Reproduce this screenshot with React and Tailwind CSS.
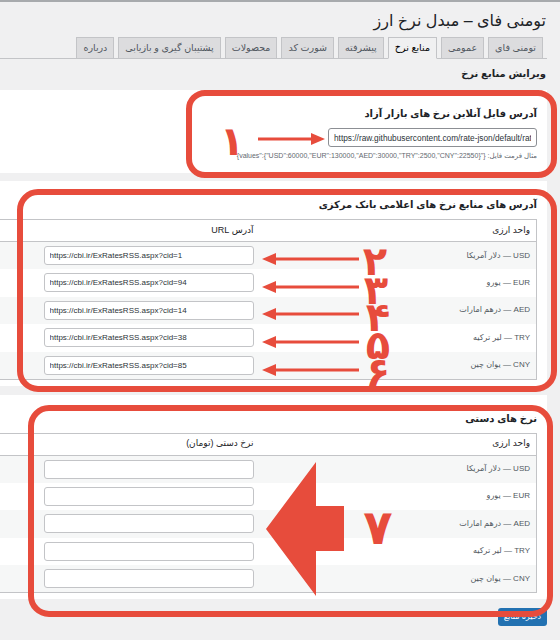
import React from "react";

const currencies = [
  { code: "USD", name: "دلار آمریکا", cid: 1 },
  { code: "EUR", name: "یورو", cid: 94 },
  { code: "AED", name: "درهم امارات", cid: 14 },
  { code: "TRY", name: "لیر ترکیه", cid: 38 },
  { code: "CNY", name: "یوان چین", cid: 85 },
];

const tabs = [
  "تومنی فای",
  "عمومی",
  "منابع نرخ",
  "پیشرفته",
  "شورت کد",
  "محصولات",
  "پشتیبان گیری و بازیابی",
  "درباره",
];

function RateTable({ title, colTitle, withUrl }) {
  return (
    <div className="bg-white pt-[16px] pb-[6px] pr-[10px] mb-[9px]">
      <h2 className="text-[10px] leading-[16px] font-bold text-[#1d2327] mb-[6px]">
        {title}
      </h2>
      <table className="w-full border border-l-0 border-[#c3c4c7] border-collapse">
        <thead>
          <tr className="h-[22px] border-b border-[#c3c4c7] bg-white">
            <th className="w-[277px] pr-[6px] text-right font-normal text-[9px] text-[#1d2327]">
              واحد ارزی
            </th>
            <th className="pr-[6px] text-right font-normal text-[9px] text-[#1d2327]">
              {colTitle}
            </th>
          </tr>
        </thead>
        <tbody>
          {currencies.map((c, i) => (
            <tr
              key={c.code}
              className={i % 2 === 0 ? "h-[27.5px] bg-[#f6f7f7]" : "h-[27.5px] bg-white"}
            >
              <td className="pr-[6px] text-[8px] text-[#50575e]">
                {c.code} — {c.name}
              </td>
              <td className="pr-[6px]">
                <input
                  readOnly
                  dir="ltr"
                  value={withUrl ? `https://cbi.ir/ExRatesRSS.aspx?cid=${c.cid}` : ""}
                  className="block w-[210px] h-[19px] border border-[#c3c4c7] rounded-[3px] bg-white px-[5px] text-[8px] text-[#2c3338] outline-none"
                />
              </td>
            </tr>
          ))}
        </tbody>
      </table>
    </div>
  );
}

function Annotations() {
  const red = "#e74c3c";
  const rowArrows = [257, 285, 312, 340, 368];
  return (
    <svg
      className="absolute left-0 top-0 pointer-events-none"
      width="560"
      height="640"
      viewBox="0 0 560 640"
    >
      <g fill="none" stroke={red} strokeWidth="6">
        <rect x="189" y="91" width="365" height="82" rx="16" />
        <rect x="20" y="190" width="534" height="197" rx="18" />
        <rect x="31" y="406" width="519" height="206" rx="18" />
      </g>

      <g fill={red}>
        <rect x="258" y="135.5" width="56" height="3" />
        <polygon points="311,131 325,137 311,143" />
        {rowArrows.map((y) => (
          <g key={y}>
            <rect x="272" y={y - 1.5} width="87" height="3" />
            <polygon points={`262,${y} 276,${y - 6} 276,${y + 6}`} />
          </g>
        ))}
        <polygon points="266,527 316,460 316,504 344,504 344,549 316,549 316,594" />
      </g>

      <g
        fill={red}
        fontFamily="'DejaVu Sans', sans-serif"
        fontWeight="bold"
        textAnchor="middle"
      >
        <text x="232" y="153" fontSize="40">۱</text>
        <text x="375" y="273" fontSize="40">۲</text>
        <text x="376" y="302" fontSize="40">۳</text>
        <text x="378" y="329" fontSize="40">۴</text>
        <text x="378" y="357" fontSize="40">۵</text>
        <text x="378" y="384" fontSize="40">۶</text>
        <text x="378" y="542" fontSize="48">۷</text>
      </g>
    </svg>
  );
}

export default function App() {
  return (
    <div className="relative w-[560px] h-[640px] overflow-hidden bg-[#f0f0f1] border-t-2 border-[#a7aaad] font-['Liberation_Sans','DejaVu_Sans',sans-serif]">
      <div dir="rtl" className="pr-[13px]">
        <h1 className="pt-[8px] pr-[1px] text-[16px] leading-[22px] text-[#1d2327]">
          تومنی فای – مبدل نرخ ارز
        </h1>

        <nav className="mt-[5px] flex gap-[4px] pr-[4px] border-b border-[#c3c4c7]">
          {tabs.map((t) => (
            <span
              key={t}
              className={
                t === "منابع نرخ"
                  ? "-mb-px h-[22px] px-[6px] flex items-center text-[9.5px] text-black bg-[#f0f0f1] border border-[#c3c4c7] border-b-[#f0f0f1]"
                  : "-mb-px h-[22px] px-[6px] flex items-center text-[9.5px] text-[#50575e] bg-[#dcdcde] border border-[#c3c4c7]"
              }
            >
              {t}
            </span>
          ))}
        </nav>

        <h2 className="mt-[7px] pr-[1px] text-[10px] leading-[16px] font-bold text-[#1d2327]">
          ویرایش منابع نرخ
        </h2>

        <div className="mt-[8px] bg-white pt-[16px] pb-[11px] pr-[10px] mb-[8px]">
          <h2 className="text-[10px] leading-[16px] font-bold text-[#1d2327] mb-[6px]">
            آدرس فایل آنلاین نرخ های بازار آزاد
          </h2>
          <input
            readOnly
            dir="ltr"
            value="https://raw.githubusercontent.com/rate-json/default/rates.json"
            className="block w-[209px] h-[19px] border border-[#8c8f94] rounded-[3px] bg-white px-[5px] text-[8.3px] text-[#2c3338] outline-none"
          />
          <p className="mt-[3px] text-[7px] leading-[12px] text-[#646970]">
            مثال فرمت فایل: {'{"values":{"USD":60000,"EUR":130000,"AED":30000,"TRY":2500,"CNY":22550}}'}
          </p>
        </div>

        <RateTable
          title="آدرس های منابع نرخ های اعلامی بانک مرکزی"
          colTitle="آدرس URL"
          withUrl
        />
        <RateTable title="نرخ های دستی" colTitle="نرخ دستی (تومان)" />

        <div className="flex">
          <button className="h-[18px] w-[49px] rounded-[3px] bg-[#2271b1] text-white text-[8px] leading-none">
            ذخیره منابع
          </button>
        </div>
      </div>
      <Annotations />
    </div>
  );
}
